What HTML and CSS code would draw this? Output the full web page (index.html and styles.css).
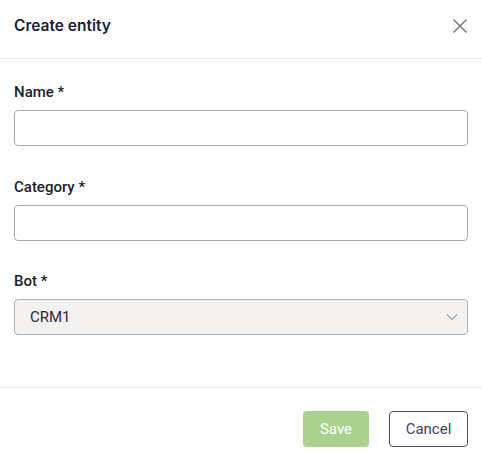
FILE: index.html
```html
<!DOCTYPE html>
<html>
<head>
<meta charset="utf-8">
<link rel="stylesheet" href="styles.css">
</head>
<body>
<div class="modal">
  <div class="header">
    <h1 class="title">Create entity</h1>
    <button class="close" aria-label="Close">
      <svg width="16" height="16" viewBox="0 0 16 16"><path d="M1.5 1.5L14.5 14.5M14.5 1.5L1.5 14.5" stroke="#7a7a7a" stroke-width="1.5" fill="none"/></svg>
    </button>
  </div>
  <div class="body">
    <div class="field">
      <label class="label">Name *</label>
      <div class="input"></div>
    </div>
    <div class="field">
      <label class="label">Category *</label>
      <div class="input"></div>
    </div>
    <div class="field">
      <label class="label">Bot *</label>
      <div class="select">
        <span>CRM1</span>
        <svg width="12" height="8" viewBox="0 0 12 8"><path d="M1 1.5L6 6.5L11 1.5" stroke="#a0a0a0" stroke-width="1.2" fill="none"/></svg>
      </div>
    </div>
  </div>
  <div class="footer">
    <button class="btn save">Save</button>
    <button class="btn cancel">Cancel</button>
  </div>
</div>
</body>
</html>
```
FILE: styles.css
```css
* { box-sizing: border-box; }
html, body { margin: 0; padding: 0; background: #fff; }
body { font-family: Roboto, "Liberation Sans", sans-serif; width: 482px; height: 463px; overflow: hidden; }
.modal { width: 482px; }
.header {
  display: flex; align-items: flex-start; justify-content: space-between;
  padding: 14px 14px 20px 14px; border-bottom: 1px solid #ebebeb; height: 59px;
}
.title { margin: 0; font-family: Inter, sans-serif; font-weight: 600; font-size: 15.5px; line-height: 24px; color: #1b1e36; }
.close { background: none; border: 0; padding: 0; margin-top: 4px; margin-right: 0; width: 16px; height: 16px; display: flex; }
.body { padding: 23px 14px 52px 14px; border-bottom: 1px solid #ebebeb; display: flex; flex-direction: column; gap: 30.5px; }
.field { display: flex; flex-direction: column; gap: 8px; }
.label { font-size: 15px; line-height: 20px; font-weight: 500; color: #1d1d2b; }
.input { height: 36px; border: 1px solid #a9a9a9; border-radius: 4px; background: #fff; }
.select { height: 36px; border: 1px solid #b0b0b0; border-radius: 4px; background: #f2f1f0;
  display: flex; align-items: center; justify-content: space-between; padding: 0 9px 0 15px;
  font-size: 15px; color: #262a3a; }
.footer { display: flex; justify-content: flex-end; gap: 20px; padding: 23px 14px 16px 14px; }
.btn { height: 36px; border-radius: 4px; font-family: Roboto, sans-serif; font-size: 15px; padding: 0; }
.save { width: 66px; background: #aad18e; color: #fff; border: 0; }
.cancel { width: 79px; background: #fff; color: #3d4460; border: 1px solid #4a5068; }
```
